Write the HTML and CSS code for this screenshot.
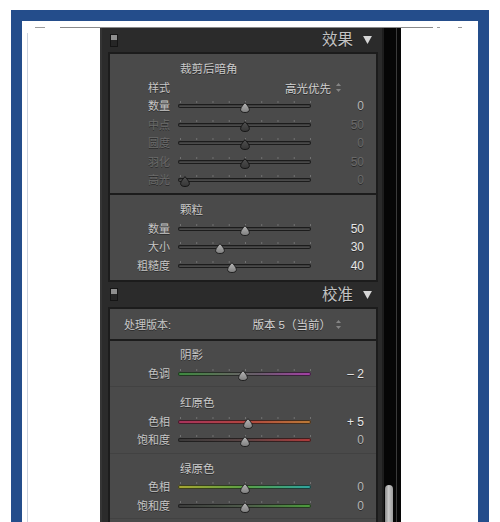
FILE: index.html
```html
<!DOCTYPE html>
<html>
<head>
<meta charset="utf-8">
<link rel="stylesheet" href="styles.css">
</head>
<body>
<svg class="defs" width="0" height="0">
  <defs>
    <linearGradient id="thumbOn" x1="0" y1="0" x2="0" y2="1">
      <stop offset="0" stop-color="#b8b8b8"/>
      <stop offset="1" stop-color="#7e7e7e"/>
    </linearGradient>
    <linearGradient id="thumbOff" x1="0" y1="0" x2="0" y2="1">
      <stop offset="0" stop-color="#505050"/>
      <stop offset="1" stop-color="#363636"/>
    </linearGradient>
  </defs>
</svg>
<div class="frame">
  <div class="inner">
    <div class="topline"><span class="d1"></span><span class="d2"></span><span class="d3"></span><span class="d4"></span></div>
    <div class="panes">
      <div class="side-left"><div class="vline"></div></div>
      <div class="panel">
        <div class="main">
          <div class="header">
            <span class="switch"></span>
            <span class="htitle">效果</span>
            <svg class="tri" viewBox="0 0 10 9"><polygon points="0,0 10,0 5,9"/></svg>
          </div>
          <div class="box">
            <div class="group vignette">
              <div class="gtitle">裁剪后暗角</div>
              <div class="row">
                <span class="label">样式</span>
                <span class="select">高光优先<svg class="updown" viewBox="0 0 5 9"><polygon points="2.5,0 5,3 0,3"/><polygon points="0,6 5,6 2.5,9"/></svg></span>
              </div>
              <div class="row">
                <span class="label">数量</span>
                <div class="slider" style="--v:0.5"><i class="ticks"></i><i class="track"></i><svg class="thumb" viewBox="0 0 10 11"><path d="M5 0.6C6.3 2.4 9.4 5.2 9.4 7.6C9.4 9.6 7.5 10.5 5 10.5C2.5 10.5 0.6 9.6 0.6 7.6C0.6 5.2 3.7 2.4 5 0.6Z"/></svg></div>
                <span class="val">0</span>
              </div>
              <div class="row off">
                <span class="label">中点</span>
                <div class="slider" style="--v:0.5"><i class="ticks"></i><i class="track"></i><svg class="thumb" viewBox="0 0 10 11"><path d="M5 0.6C6.3 2.4 9.4 5.2 9.4 7.6C9.4 9.6 7.5 10.5 5 10.5C2.5 10.5 0.6 9.6 0.6 7.6C0.6 5.2 3.7 2.4 5 0.6Z"/></svg></div>
                <span class="val">50</span>
              </div>
              <div class="row off">
                <span class="label">圆度</span>
                <div class="slider" style="--v:0.5"><i class="ticks"></i><i class="track"></i><svg class="thumb" viewBox="0 0 10 11"><path d="M5 0.6C6.3 2.4 9.4 5.2 9.4 7.6C9.4 9.6 7.5 10.5 5 10.5C2.5 10.5 0.6 9.6 0.6 7.6C0.6 5.2 3.7 2.4 5 0.6Z"/></svg></div>
                <span class="val">0</span>
              </div>
              <div class="row off">
                <span class="label">羽化</span>
                <div class="slider" style="--v:0.5"><i class="ticks"></i><i class="track"></i><svg class="thumb" viewBox="0 0 10 11"><path d="M5 0.6C6.3 2.4 9.4 5.2 9.4 7.6C9.4 9.6 7.5 10.5 5 10.5C2.5 10.5 0.6 9.6 0.6 7.6C0.6 5.2 3.7 2.4 5 0.6Z"/></svg></div>
                <span class="val">50</span>
              </div>
              <div class="row off">
                <span class="label">高光</span>
                <div class="slider" style="--v:0.02"><i class="ticks"></i><i class="track"></i><svg class="thumb" viewBox="0 0 10 11"><path d="M5 0.6C6.3 2.4 9.4 5.2 9.4 7.6C9.4 9.6 7.5 10.5 5 10.5C2.5 10.5 0.6 9.6 0.6 7.6C0.6 5.2 3.7 2.4 5 0.6Z"/></svg></div>
                <span class="val">0</span>
              </div>
            </div>
            <div class="sep-dark"></div>
            <div class="group grain">
              <div class="gtitle">颗粒</div>
              <div class="row">
                <span class="label">数量</span>
                <div class="slider" style="--v:0.5"><i class="ticks"></i><i class="track"></i><svg class="thumb" viewBox="0 0 10 11"><path d="M5 0.6C6.3 2.4 9.4 5.2 9.4 7.6C9.4 9.6 7.5 10.5 5 10.5C2.5 10.5 0.6 9.6 0.6 7.6C0.6 5.2 3.7 2.4 5 0.6Z"/></svg></div>
                <span class="val hi">50</span>
              </div>
              <div class="row">
                <span class="label">大小</span>
                <div class="slider" style="--v:0.3"><i class="ticks"></i><i class="track"></i><svg class="thumb" viewBox="0 0 10 11"><path d="M5 0.6C6.3 2.4 9.4 5.2 9.4 7.6C9.4 9.6 7.5 10.5 5 10.5C2.5 10.5 0.6 9.6 0.6 7.6C0.6 5.2 3.7 2.4 5 0.6Z"/></svg></div>
                <span class="val hi">30</span>
              </div>
              <div class="row">
                <span class="label">粗糙度</span>
                <div class="slider" style="--v:0.4"><i class="ticks"></i><i class="track"></i><svg class="thumb" viewBox="0 0 10 11"><path d="M5 0.6C6.3 2.4 9.4 5.2 9.4 7.6C9.4 9.6 7.5 10.5 5 10.5C2.5 10.5 0.6 9.6 0.6 7.6C0.6 5.2 3.7 2.4 5 0.6Z"/></svg></div>
                <span class="val hi">40</span>
              </div>
            </div>
          </div>

          <div class="header h2">
            <span class="switch"></span>
            <span class="htitle">校准</span>
            <svg class="tri" viewBox="0 0 10 9"><polygon points="0,0 10,0 5,9"/></svg>
          </div>
          <div class="box">
            <div class="process">
              <span class="plabel">处理版本:</span>
              <span class="pselect">版本 5（当前）<svg class="updown" viewBox="0 0 5 9"><polygon points="2.5,0 5,3 0,3"/><polygon points="0,6 5,6 2.5,9"/></svg></span>
            </div>
            <div class="sep-dark"></div>
            <div class="group shadow">
              <div class="gtitle">阴影</div>
              <div class="row">
                <span class="label">色调</span>
                <div class="slider" style="--v:0.49"><i class="ticks"></i><i class="track tint"></i><svg class="thumb" viewBox="0 0 10 11"><path d="M5 0.6C6.3 2.4 9.4 5.2 9.4 7.6C9.4 9.6 7.5 10.5 5 10.5C2.5 10.5 0.6 9.6 0.6 7.6C0.6 5.2 3.7 2.4 5 0.6Z"/></svg></div>
                <span class="val hi">– 2</span>
              </div>
            </div>
            <div class="sep-soft"></div>
            <div class="group red">
              <div class="gtitle">红原色</div>
              <div class="row">
                <span class="label">色相</span>
                <div class="slider" style="--v:0.525"><i class="ticks"></i><i class="track rhue"></i><svg class="thumb" viewBox="0 0 10 11"><path d="M5 0.6C6.3 2.4 9.4 5.2 9.4 7.6C9.4 9.6 7.5 10.5 5 10.5C2.5 10.5 0.6 9.6 0.6 7.6C0.6 5.2 3.7 2.4 5 0.6Z"/></svg></div>
                <span class="val hi">+ 5</span>
              </div>
              <div class="row">
                <span class="label">饱和度</span>
                <div class="slider" style="--v:0.5"><i class="ticks"></i><i class="track rsat"></i><svg class="thumb" viewBox="0 0 10 11"><path d="M5 0.6C6.3 2.4 9.4 5.2 9.4 7.6C9.4 9.6 7.5 10.5 5 10.5C2.5 10.5 0.6 9.6 0.6 7.6C0.6 5.2 3.7 2.4 5 0.6Z"/></svg></div>
                <span class="val">0</span>
              </div>
            </div>
            <div class="sep-soft"></div>
            <div class="group green">
              <div class="gtitle">绿原色</div>
              <div class="row">
                <span class="label">色相</span>
                <div class="slider" style="--v:0.5"><i class="ticks"></i><i class="track ghue"></i><svg class="thumb" viewBox="0 0 10 11"><path d="M5 0.6C6.3 2.4 9.4 5.2 9.4 7.6C9.4 9.6 7.5 10.5 5 10.5C2.5 10.5 0.6 9.6 0.6 7.6C0.6 5.2 3.7 2.4 5 0.6Z"/></svg></div>
                <span class="val">0</span>
              </div>
              <div class="row">
                <span class="label">饱和度</span>
                <div class="slider" style="--v:0.5"><i class="ticks"></i><i class="track gsat"></i><svg class="thumb" viewBox="0 0 10 11"><path d="M5 0.6C6.3 2.4 9.4 5.2 9.4 7.6C9.4 9.6 7.5 10.5 5 10.5C2.5 10.5 0.6 9.6 0.6 7.6C0.6 5.2 3.7 2.4 5 0.6Z"/></svg></div>
                <span class="val">0</span>
              </div>
            </div>
            <div class="sep-soft"></div>
            <div class="group blue"></div>
          </div>
        </div>
        <div class="scroll"><div class="sthumb"></div></div>
      </div>
      <div class="side-right"></div>
    </div>
  </div>
</div>
</body>
</html>
```

FILE: styles.css
```css
* { box-sizing: border-box; }
html, body { margin: 0; padding: 0; }
body {
  width: 500px;
  height: 522px;
  overflow: hidden;
  background: #ffffff;
  font-family: "Liberation Sans", "Noto Sans CJK SC", sans-serif;
}
.defs { display: block; width: 0; height: 0; overflow: hidden; }

.frame {
  margin: 10px 0 0 11px;
  width: 478px;
  height: 580px;
  border: 11px solid #244d8b;
  background: #ffffff;
}
.inner {
  height: 100%;
  display: flex;
  flex-direction: column;
  padding-top: 6px;
}
.topline { display: flex; height: 1px; flex: none; }
.topline span { height: 1px; background: #9c9c9c; }
.topline .d1 { margin-left: 13px; width: 10px; }
.topline .d2 { margin-left: 15px; width: 373px; background: #8a8a8a; }
.topline .d3 { margin-left: 4px; width: 3px; }
.topline .d4 { margin-left: 18px; width: 4px; }

.panes { display: flex; flex: 1; }
.side-left { width: 78px; flex: none; padding: 5px 0 0 5px; }
.vline { width: 1px; height: 100%; background: #cdd4df; }
.side-right { flex: 1; }

.panel { width: 301px; flex: none; display: flex; }
.main {
  width: 282px;
  flex: none;
  background: #2b2b2b;
  border-left: 2px solid #353535;
  color: #c4c4c4;
  text-shadow: 0 1px 0 rgba(0, 0, 0, 0.45);
}

.header {
  height: 24px;
  display: flex;
  align-items: center;
  padding: 0 10px 0 8px;
}
.header.h2 { height: 25px; }
.switch {
  width: 8px;
  height: 13px;
  border: 1px solid #151515;
  background: linear-gradient(to bottom, #8e8e8e 0, #8e8e8e 45%, #262626 45%, #262626 100%);
}
.htitle {
  margin-left: auto;
  font-size: 15.5px;
  color: #c2c2c2;
  line-height: 20px;
}
.tri { width: 9px; height: 8px; margin-left: 10px; fill: #d6d6d6; }

.box {
  margin: 0 4px 0 6px;
  border: 2px solid #1c1c1c;
  background: #4a4a4a;
}
.sep-dark { height: 2px; background: #1c1c1c; }
.sep-soft { height: 1px; background: #424242; }

.vignette { padding: 6px 0 3.5px; }
.grain { padding: 6px 0 5px; }
.shadow { padding: 5px 0 3px; }
.red { padding: 7px 0 3px; }
.green { padding: 6px 0 3px; }
.blue { height: 30px; }

.gtitle {
  padding-left: 70px;
  font-size: 11.5px;
  line-height: 18.5px;
  color: #cacaca;
}
.row {
  display: flex;
  align-items: center;
  height: 18.5px;
}
.label {
  width: 60px;
  flex: none;
  text-align: right;
  font-size: 11px;
  line-height: 18.5px;
  color: #c6c6c6;
}
.val {
  width: 53px;
  flex: none;
  text-align: right;
  font-size: 12px;
  color: #b8b8b8;
}
.val.hi { color: #e8e8e8; }
.row.off .label, .row.off .val { color: #6a6a6a; }

.select {
  width: 163px;
  margin-left: 8px;
  display: flex;
  align-items: center;
  justify-content: flex-end;
  font-size: 11.5px;
  color: #d2d2d2;
}
.updown { width: 5px; height: 9px; margin-left: 5px; fill: #858585; }

.slider {
  position: relative;
  width: 133px;
  height: 18.5px;
  margin-left: 8px;
  flex: none;
}
.ticks {
  position: absolute;
  left: 2px;
  width: 131px;
  top: 4px;
  height: 2px;
  background-image: linear-gradient(to right, #727272 0, #727272 1px, transparent 1px);
  background-size: 16.25px 100%;
  background-repeat: repeat-x;
}
.track {
  position: absolute;
  left: 0;
  right: 0;
  top: 7px;
  height: 4px;
  border-radius: 2px;
  background: linear-gradient(to bottom, #2c2c2c, #5c5c5c);
  box-shadow: inset 0 0 0 1px #1c1c1c;
}
.track.tint { background: linear-gradient(to right, #3c8a3e, #5e6e5a 35%, #6a5c6c 60%, #a43ea6); }
.track.rhue { background: linear-gradient(to right, #a8325c, #b0443f 50%, #bb7a36); }
.track.rsat { background: linear-gradient(to right, #3a3a3a, #5a4444 50%, #b03a3a); }
.track.ghue { background: linear-gradient(to right, #a8a632, #5aa044 50%, #2ea4a0); }
.track.gsat { background: linear-gradient(to right, #3c3c3c, #4e5a4a 50%, #4c9c3c); }
.track.tint, .track.rhue, .track.rsat, .track.ghue, .track.gsat {
  box-shadow: inset 0 0 0 1px rgba(20, 20, 20, 0.7);
}
.thumb {
  position: absolute;
  top: 5px;
  left: calc(var(--v) * (100% - 10px));
  width: 10px;
  height: 11px;
}
.thumb path { fill: url(#thumbOn); stroke: #181818; stroke-width: 0.9; }
.row.off .thumb path { fill: url(#thumbOff); stroke: #121212; }

.process {
  height: 30px;
  display: flex;
  align-items: center;
  padding-left: 14px;
}
.plabel { font-size: 11px; color: #c8c8c8; }
.pselect {
  margin-left: auto;
  margin-right: 35px;
  display: flex;
  align-items: center;
  font-size: 11.5px;
  color: #d4d4d4;
}

.scroll {
  width: 19px;
  flex: none;
  background: #060606;
  border-left: 2px solid #1e1e1e;
  padding: 457px 0 0 1px;
  box-shadow: inset -4px 0 0 #060606, inset -5px 0 0 #3a3a3a;
}
.sthumb {
  width: 8px;
  height: 80px;
  border-radius: 4px 4px 0 0;
  background: linear-gradient(to right, #8a8a8a, #c8c8c8 45%, #9c9c9c);
}
```
